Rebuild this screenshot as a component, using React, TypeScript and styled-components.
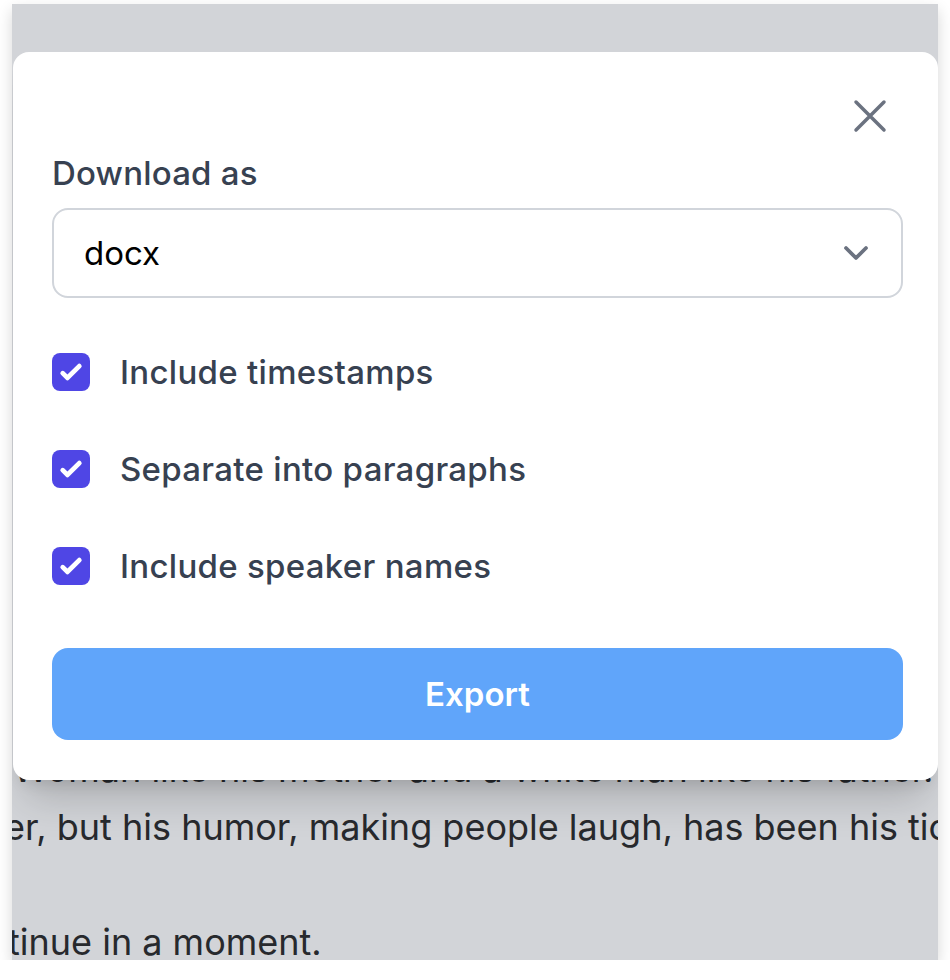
import React, { FC } from 'react';
import styled, { createGlobalStyle } from 'styled-components';

const GlobalStyle = createGlobalStyle`
	html, body {
		margin: 0;
		padding: 0;
		background: #ffffff;
	}
	body {
		font-family: Inter, "Noto Sans", "Liberation Sans", sans-serif;
		-webkit-font-smoothing: antialiased;
	}
`;

const Frame = styled.div`
	position: relative;
	margin: 4px 0 0 12px;
	width: 926px;
	height: 956px;
	overflow: hidden;
	background: #d2d4d8;
	box-shadow: 0 6px 14px rgba(0, 0, 0, 0.16);
`;

const Transcript = styled.div`
	padding-top: 156px;
	font-size: 36px;
	line-height: 58px;
	color: #27292d;
`;

const Paragraph = styled.div<{ $gap?: number }>`
	margin-top: ${props => props.$gap || 0}px;
`;

const Line = styled.div<{ $shift?: number }>`
	white-space: nowrap;
	margin-left: ${props => props.$shift || 0}px;
`;

const Modal = styled.div`
	position: absolute;
	top: 48px;
	left: 1px;
	width: 925px;
	box-sizing: border-box;
	padding: 36px 35px 40px 39px;
	background: #ffffff;
	border-radius: 16px;
	box-shadow: 0 30px 40px -12px rgba(0, 0, 0, 0.18), 0 10px 16px -8px rgba(0, 0, 0, 0.12);
	display: flex;
	flex-direction: column;
`;

const CloseRow = styled.div`
	display: flex;
	justify-content: flex-end;
	padding-right: 5px;
	height: 56px;
`;

const CloseButton = styled.button`
	width: 56px;
	height: 56px;
	padding: 0;
	border: none;
	background: none;
	color: #6b7280;
	display: flex;
	align-items: center;
	justify-content: center;
	cursor: pointer;
`;

const Label = styled.div`
	margin-top: 9px;
	font-size: 33px;
	line-height: 40px;
	font-weight: 500;
	letter-spacing: 0.2px;
	color: #374151;
`;

const Select = styled.div`
	margin-top: 15px;
	height: 90px;
	box-sizing: border-box;
	border: 2px solid #d1d5db;
	border-radius: 16px;
	padding: 0 20px 0 30px;
	display: flex;
	align-items: center;
	justify-content: space-between;
	font-size: 33px;
	color: #000000;
`;

const Chevron = styled.span`
	display: flex;
	color: #6b7280;
`;

const Options = styled.div`
	margin-top: 54px;
	display: flex;
	flex-direction: column;
	gap: 57px;
`;

const OptionRow = styled.label`
	display: flex;
	align-items: center;
	height: 40px;
	gap: 30px;
	font-size: 33px;
	font-weight: 500;
	letter-spacing: 0.3px;
	color: #374151;
`;

const Box = styled.span`
	width: 38px;
	height: 38px;
	flex-shrink: 0;
	border-radius: 8px;
	background: #4f46e5;
	display: flex;
	align-items: center;
	justify-content: center;
`;

const ExportButton = styled.button`
	margin-top: 62px;
	height: 92px;
	border: none;
	border-radius: 16px;
	background: #60a5fa;
	color: #ffffff;
	font-family: inherit;
	font-size: 33px;
	font-weight: 600;
	cursor: pointer;
`;

const transcriptTop: string[] = [
	'His early years were spent moving between two worlds, and',
	'he often said that he never quite belonged to either one.',
	'Growing up under apartheid, his very existence was a crime,',
	'the child of a Black Xhosa woman and a white Swiss father.',
	'He learned early on that language was a way to fit in, and',
	'he picked up English, Afrikaans, Zulu and Xhosa as a boy.',
	'Being mixed race meant that he was neither one thing nor',
	'another, and people rarely knew where to place him at all.',
	'He could not be seen in public with his father, nor could he',
	'walk with his mother without drawing the eyes of strangers.',
];

const CheckIcon: FC = () => (
	<svg width='38' height='38' viewBox='0 0 16 16' fill='#ffffff'>
		<path d='M12.207 4.793a1 1 0 010 1.414l-5 5a1 1 0 01-1.414 0l-2-2a1 1 0 011.414-1.414L6.5 9.086l4.293-4.293a1 1 0 011.414 0z' />
	</svg>
);

const Option: FC<{ text: string }> = (props) => (
	<OptionRow>
		<Box><CheckIcon /></Box>
		{props.text}
	</OptionRow>
);

const App: FC = () => {
	const options = ['Include timestamps', 'Separate into paragraphs', 'Include speaker names'];

	return (
		<>
			<GlobalStyle />
			<Frame>
				<Transcript>
					<Paragraph>
						{transcriptTop.map((t, i) => <Line key={'l' + i} $shift={4}>{t}</Line>)}
						<Line $shift={1}>Woman like his mother and a white man like his father.</Line>
						<Line $shift={-8}>er, but his humor, making people laugh, has been his ticket in.</Line>
					</Paragraph>
					<Paragraph $gap={57}>
						<Line $shift={-4}>tinue in a moment.</Line>
					</Paragraph>
				</Transcript>

				<Modal>
					<CloseRow>
						<CloseButton aria-label='Close'>
							<svg width='56' height='56' viewBox='0 0 24 24' fill='none' stroke='currentColor' strokeWidth='1.5' strokeLinecap='round' strokeLinejoin='round'>
								<path d='M6 18 18 6M6 6l12 12' />
							</svg>
						</CloseButton>
					</CloseRow>

					<Label>Download as</Label>
					<Select>
						docx
						<Chevron>
							<svg width='50' height='50' viewBox='0 0 20 20' fill='none' stroke='currentColor' strokeWidth='1.5' strokeLinecap='round' strokeLinejoin='round'>
								<path d='M6 8l4 4 4-4' />
							</svg>
						</Chevron>
					</Select>

					<Options>
						{options.map(o => <Option key={o} text={o} />)}
					</Options>

					<ExportButton>Export</ExportButton>
				</Modal>
			</Frame>
		</>
	);
};

export default App;
